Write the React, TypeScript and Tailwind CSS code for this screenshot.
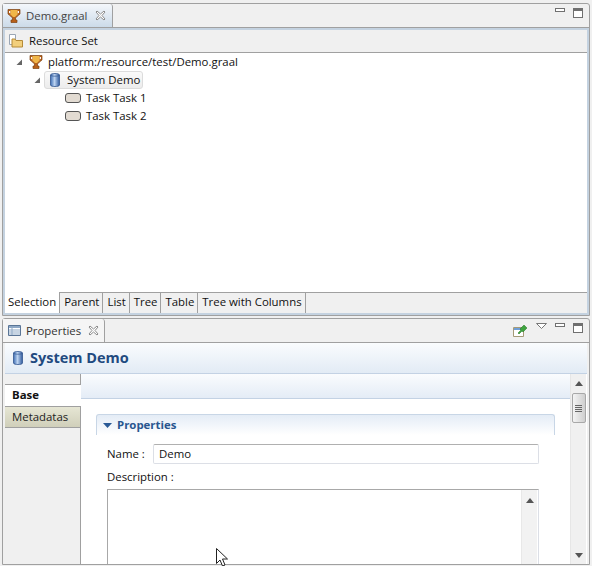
import React from "react";

const font = "font-['Open_Sans','Noto_Sans',sans-serif]";

const Trophy = () => (
  <svg width="14" height="16" viewBox="0 0 14 16" className="shrink-0">
    <path d="M1 1.500h12V6l-2.500 2-2 2v2H10v2.500H4V12h1.500v-2l-2-2L1 6z" fill="#b9601a" stroke="#7d4312" strokeWidth="0.7" />
    <path d="M3.500 2h7v4.500L8 9H6L3.500 6.500z" fill="#f0b648" />
    <path d="M2 3h1.300v2.500L2 4.700zM12 3h-1.300v2.500L12 4.700z" fill="#fff" />
  </svg>
);

const Cylinder = () => (
  <svg width="12" height="16" viewBox="0 0 12 16" className="shrink-0">
    <defs>
      <linearGradient id="cyl" x1="0" x2="1" y1="0" y2="0">
        <stop offset="0" stopColor="#3f6fb5" />
        <stop offset="0.45" stopColor="#bcd3f0" />
        <stop offset="1" stopColor="#2f5a9e" />
      </linearGradient>
    </defs>
    <path d="M1.500 3C1.500 1 10.500 1 10.500 3v10c0 2-9 2-9 0z" fill="url(#cyl)" stroke="#33578f" strokeWidth="0.8" />
    <path d="M1.500 3c0 1.600 9 1.600 9 0" fill="none" stroke="#33578f" strokeWidth="0.7" />
  </svg>
);

const CloseIcon = () => (
  <svg width="11" height="11" viewBox="0 0 11 11">
    <path d="M1 2l1-1 3.500 3L9 1l1 1-3 3.500 3 3.500-1 1-3.500-3L2 10 1 9l3-3.500z" fill="#fff" stroke="#8c8c8c" strokeWidth="1" />
  </svg>
);

const Arrow = () => (
  <svg width="8" height="8" viewBox="0 0 8 8" className="shrink-0">
    <path d="M7 1.500V7H1.500z" fill="#666" />
  </svg>
);

const MinMax = () => (
  <div className="flex items-start gap-[8px]">
    <div className="w-[10px] h-[4px] border border-[#707070] bg-white" />
    <div className="w-[10px] h-[10px] border border-[#707070] bg-white border-t-[3px]" />
  </div>
);

const Task = ({ label }: { label: string }) => (
  <div className="h-[18px] pl-[60px] flex items-center gap-[5px]">
    <div className="w-[16px] h-[10px] rounded-[3px] border border-[#555] bg-[#e2dbd2]" />
    <span>{label}</span>
  </div>
);

const ScrollButton = ({ down }: { down?: boolean }) => (
  <svg width="8" height="5" viewBox="0 0 8 5" className={down ? "rotate-180" : ""}>
    <path d="M4 0l4 5H0z" fill="#555" />
  </svg>
);

const bottomTabs = ["Parent", "List", "Tree", "Table", "Tree with Columns"];

export default function App() {
  return (
    <div className={`${font} w-[592px] h-[566px] overflow-hidden relative bg-[#f0f0f0] text-[11.4px] leading-[16px] text-[#111] pt-[3px] pl-[2px] pr-[2px] pb-[1px] flex flex-col`}>
      {/* Editeur */}
      <div className="h-[313px] shrink-0 border border-[#a0a0a0] rounded-t-[3px] flex flex-col">
        <div className="h-[23px] shrink-0 flex items-stretch justify-between pr-[6px]">
          <div className="w-[110px] h-[23px] flex items-center gap-[5px] pl-[4px] bg-gradient-to-b from-[#f4f7fb] to-[#ccdbe9] border-r border-[#a0a0a0] rounded-tr-[3px] text-[#444]">
            <Trophy />
            <span>Demo.graal</span>
            <span className="ml-[3px] flex"><CloseIcon /></span>
          </div>
          <div className="pt-[4px]"><MinMax /></div>
        </div>
        <div className="flex-1 flex flex-col border-t border-[#a0a0a0]">
          <div className="flex-1 flex flex-col border-x-[2px] border-t-[2px] border-b-[2px] border-[#c4d2e0] min-h-0">
            <div className="h-[23px] shrink-0 flex items-center gap-[5px] pl-[3px] bg-[#f0f0f0] border-b border-[#a0a0a0] text-[#111]">
              <svg width="16" height="16" viewBox="0 0 16 16">
                <path d="M1.500 1.500h6v10h-6z" fill="#fff" stroke="#9aa6b5" />
                <path d="M4 6h3l1 1.500h6.500V14H4z" fill="#f2cf7c" stroke="#b58a36" />
              </svg>
              <span>Resource Set</span>
            </div>
            <div className="flex-1 bg-white min-h-0">
              <div className="h-[18px] pl-[10px] flex items-center">
                <Arrow />
                <span className="ml-[6px]"><Trophy /></span>
                <span className="ml-[5px]">platform:/resource/test/Demo.graal</span>
              </div>
              <div className="h-[18px] pl-[28px] flex items-center">
                <Arrow />
                <div className="ml-[3px] h-[18px] pl-[4px] pr-[2px] flex items-center gap-[6px] border border-[#dcdcdc] rounded-[3px] bg-gradient-to-b from-[#fafafa] to-[#ececec]">
                  <Cylinder />
                  <span>System Demo</span>
                </div>
              </div>
              <Task label="Task Task 1" />
              <Task label="Task Task 2" />
            </div>
            <div className="h-[21px] shrink-0 flex bg-[#f0f0f0] border-t border-[#a0a0a0]">
              <div className="h-[21px] -mt-[1px] px-[3px] pb-[1px] bg-white border-r border-[#a0a0a0] flex items-center">Selection</div>
              {bottomTabs.map((t) => (
                <div key={t} className="pl-[4px] pr-[3px] pb-[2px] border-r border-[#a0a0a0] flex items-center">{t}</div>
              ))}
            </div>
          </div>
        </div>
      </div>

      {/* Proprietes */}
      <div className="mt-[2px] flex-1 min-h-0 border border-[#a0a0a0] rounded-t-[3px] flex flex-col">
        <div className="h-[23px] shrink-0 flex justify-between">
          <div className="w-[102px] flex items-center gap-[4px] pl-[5px] bg-[#f5f5f5] border-r border-[#a0a0a0] rounded-tr-[3px]">
            <svg width="14" height="12" viewBox="0 0 14 12" className="shrink-0">
              <path d="M.5.500h12v10H.5z" fill="#fff" stroke="#5a7596" />
              <path d="M1 1h11v2H1z" fill="#8fa9c6" />
              <path d="M1 5h11M1 7h11M1 9h11M4 3v7" stroke="#8fa9c6" fill="none" />
            </svg>
            <span className="text-[#333]">Properties</span>
            <span className="ml-[3px] flex"><CloseIcon /></span>
          </div>
          <div className="flex items-start pt-[4px] pr-[6px]">
            <svg width="15" height="15" viewBox="0 0 15 15">
              <path d="M.5 4.500h10v9H.5z" fill="#fff" stroke="#a59a78" />
              <path d="M1 5h9v2H1z" fill="#6f9fd8" />
              <path d="M5 10l3-3-1-1 4-4 3 3-4 4-1-1-3 3z" fill="#3ea43e" stroke="#1f6e1f" strokeWidth="0.5" />
            </svg>
            <svg width="11" height="6" viewBox="0 0 11 6" className="ml-[8px] mr-[8px]">
              <path d="M.5.500h10L5.500 5.500z" fill="#fff" stroke="#777" />
            </svg>
            <MinMax />
          </div>
        </div>
        <div className="flex-1 min-h-0 flex flex-col border-t border-[#a0a0a0] px-[2px]">
          <div className="h-[31px] shrink-0 flex items-center gap-[6px] pl-[7px] bg-gradient-to-b from-[#fafcfe] to-[#e2ebf5] border-b border-[#c3d2e4] text-[14.5px] font-bold text-[#1f4a80]">
            <Cylinder />
            <span>System Demo</span>
          </div>
          <div className="flex-1 min-h-0 flex">
            <div className="w-[76px] shrink-0 border-r border-[#a0a0a0] flex flex-col pt-[10px]">
              <div className="h-[1px] bg-[#a0a0a0]" />
              <div className="h-[21px] w-[76px] pb-[2px] bg-white pl-[7px] flex items-center font-bold">Base</div>
              <div className="h-[1px] bg-[#a0a0a0]" />
              <div className="h-[20px] pl-[7px] flex items-center bg-gradient-to-b from-[#e6e6d4] to-[#d0cfba] text-[#222]">Metadatas</div>
              <div className="h-[1px] bg-[#a0a0a0]" />
            </div>
            <div className="flex-1 min-w-0 flex bg-white">
              <div className="flex-1 min-w-0 flex flex-col">
                <div className="h-[25px] shrink-0 bg-gradient-to-b from-[#fafcfe] to-[#e4ecf6] border-b border-[#c3d2e4]" />
                <div className="pt-[15px] pl-[15px] pr-[15px] flex-1 min-h-0 flex flex-col">
                  <div className="h-[21px] shrink-0 flex items-center gap-[5px] pl-[6px] border border-b-0 border-[#c8d6e6] rounded-t-[3px] bg-gradient-to-b from-[#e4ecf6] to-white font-bold text-[#29568f]">
                    <svg width="9" height="5" viewBox="0 0 9 5"><path d="M0 0h9L4.500 5z" fill="#2a5a96" /></svg>
                    <span>Properties</span>
                  </div>
                  <div className="pl-[11px] pr-[16px] pt-[9px] flex-1 min-h-0 flex flex-col">
                    <div className="flex items-center h-[20px] shrink-0">
                      <span className="w-[46px] shrink-0">Name :</span>
                      <div className="flex-1 h-[20px] border border-[#dcdfe6] border-t-[#b0b0b0] rounded-[2px] pl-[5px] flex items-center">Demo</div>
                    </div>
                    <div className="mt-[4px] h-[18px] shrink-0 flex items-center">Description :</div>
                    <div className="mt-[3px] flex-1 min-h-0 border border-b-0 border-[#dcdfe6] border-t-[#a8a8a8] border-l-[#a8a8a8] flex justify-end">
                      <div className="w-[16px] mr-[1px] bg-[#f2f2f2] border-l border-[#e8e8e8] flex justify-center pt-[8px]">
                        <ScrollButton />
                      </div>
                    </div>
                  </div>
                </div>
              </div>
              <div className="w-[16px] mr-[1px] shrink-0 bg-[#f0f0f0] border-l border-[#e6e6e6] flex flex-col items-center">
                <div className="pt-[7px] h-[19px]"><ScrollButton /></div>
                <div className="w-[14px] h-[30px] border border-[#a8a8a8] rounded-[2px] bg-gradient-to-r from-[#f4f4f4] to-[#cfcfcf] flex flex-col items-center justify-center gap-[1px]">
                  <div className="w-[7px] h-[1px] bg-[#666]" />
                  <div className="w-[7px] h-[1px] bg-[#666]" />
                  <div className="w-[7px] h-[1px] bg-[#666]" />
                  <div className="w-[7px] h-[1px] bg-[#666]" />
                </div>
                <div className="mt-auto pb-[6px]"><ScrollButton down /></div>
              </div>
            </div>
          </div>
        </div>
      </div>

      {/* curseur souris */}
      <svg width="14" height="20" viewBox="0 0 14 20" className="absolute left-[216px] top-[548px]">
        <path d="M.5.500v15l3.500-3.500 2.500 6 2.500-1-2.500-6h5z" fill="#fff" stroke="#222" />
      </svg>
    </div>
  );
}
